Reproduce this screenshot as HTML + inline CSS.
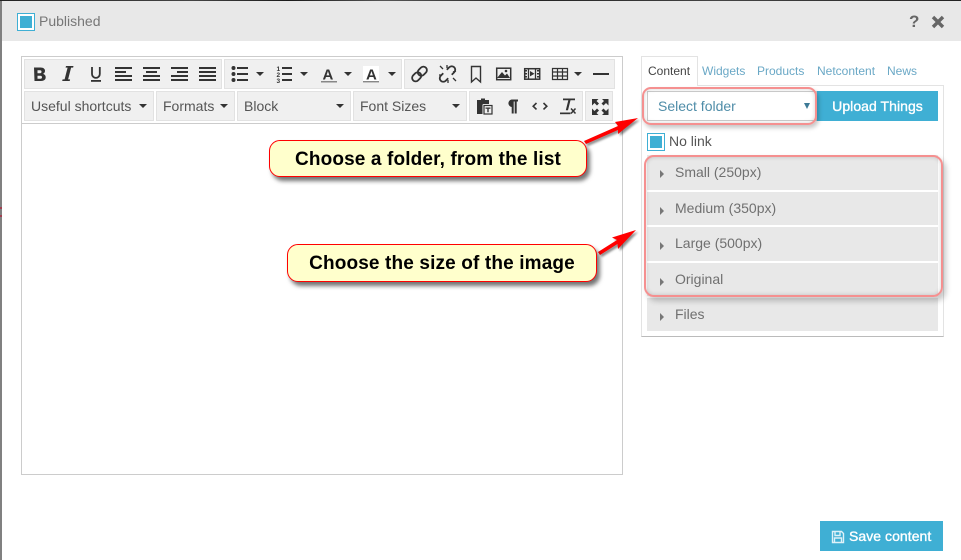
<!DOCTYPE html>
<html><head><meta charset="utf-8">
<style>
html,body{margin:0;padding:0}
body{width:961px;height:560px;overflow:hidden;position:relative;background:#fff;font-family:"Liberation Sans",sans-serif;font-size:14px;color:#555}
.a{position:absolute}
.t{position:absolute;white-space:nowrap}
.g{position:absolute;background:#f0f0f0;border:1px solid #e2e2e2;box-sizing:border-box}
.car{position:absolute;width:0;height:0;border-left:4px solid transparent;border-right:4px solid transparent;border-top:4px solid #333}
.i{position:absolute;left:0;top:0}
.row{position:absolute;left:647px;width:291px;background:#e8e8e8}
.row .tri{position:absolute;left:13px;top:15px;width:0;height:0;border-top:4px solid transparent;border-bottom:4px solid transparent;border-left:4px solid #777}
.row span{position:absolute;left:28px;top:9px;color:#707070;font-size:14px;white-space:nowrap}
.call{position:absolute;box-sizing:border-box;background:#ffffcc;border:1px solid #f00;border-radius:11px;box-shadow:3px 4px 4px rgba(0,0,0,.55);font-weight:bold;font-size:19px;letter-spacing:.14px;color:#000;text-align:center;white-space:nowrap}
.semi{color:#fff;font-weight:normal;font-size:14px;-webkit-text-stroke:.35px #fff;letter-spacing:.05px}
</style></head>
<body>
<div class="a" style="left:0;top:0;width:961px;height:2px;background:linear-gradient(90deg,#222,#444 20%,#1a1a1a 30%,#555 40%,#222 55%,#444 75%,#222)"></div>
<div class="a" style="left:0;top:1px;width:2px;height:559px;background:#808080"></div>
<div class="a" style="left:0;top:207px;width:2px;height:2px;background:#a04050"></div>
<div class="a" style="left:0;top:215px;width:2px;height:2px;background:#a04050"></div>
<div class="a" style="left:2px;top:1px;width:959px;height:40px;background:#e8e8e8"></div>

<div class="a" style="left:17px;top:13px;width:18px;height:18px;box-sizing:border-box;border:1px solid #3fafd4;background:#fff"><div class="a" style="left:2px;top:2px;width:12px;height:12px;background:#3fafd4"></div></div>
<div class="t" style="left:39px;top:13px;color:#777">Published</div>
<div class="t" style="left:909px;top:12px;font-weight:bold;font-size:17px;color:#666">?</div>
<svg class="a" style="left:931px;top:15px" width="14" height="14" viewBox="0 0 14 14"><path d="M2 2L12 12M12 2L2 12" stroke="#666" stroke-width="3.400"/></svg>

<!-- editor -->
<div class="a" style="left:21px;top:56px;width:602px;height:419px;box-sizing:border-box;border:1px solid #ccc"></div>
<div class="a" style="left:22px;top:123px;width:600px;height:1px;background:#ccc"></div>

<div class="g" style="left:24px;top:59px;width:198px;height:30px"></div>
<div class="g" style="left:224px;top:59px;width:178px;height:30px"></div>
<div class="g" style="left:404px;top:59px;width:211px;height:30px"></div>
<div class="g" style="left:24px;top:91px;width:130px;height:30px"></div>
<div class="g" style="left:156px;top:91px;width:79px;height:30px"></div>
<div class="g" style="left:237px;top:91px;width:114px;height:30px"></div>
<div class="g" style="left:353px;top:91px;width:114px;height:30px"></div>
<div class="g" style="left:469px;top:91px;width:114px;height:30px"></div>
<div class="g" style="left:585px;top:91px;width:28px;height:30px"></div>

<div class="t" style="left:31px;top:98px">Useful shortcuts</div><div class="car" style="left:139px;top:104px"></div>
<div class="t" style="left:163px;top:98px">Formats</div><div class="car" style="left:220px;top:104px"></div>
<div class="t" style="left:244px;top:98px">Block</div><div class="car" style="left:336px;top:104px"></div>
<div class="t" style="left:360px;top:98px">Font Sizes</div><div class="car" style="left:452px;top:104px"></div>

<svg class="i" width="961" height="560" viewBox="0 0 961 560">
<g fill="#333">
<!-- B -->
<path fill-rule="evenodd" d="M34 67.500h6.500c3 0 4.500 1.400 4.500 3.400 0 1.500-.8 2.600-2.200 3 1.800.4 2.900 1.600 2.900 3.400 0 2.400-1.800 3.700-4.700 3.700h-6.500zM37.500 70.200v3h2.500c1 0 1.500-.5 1.500-1.500s-.5-1.500-1.500-1.500zM37.500 75.700v3.100h2.800c1.100 0 1.700-.6 1.700-1.600s-.6-1.500-1.700-1.500z"/>
<!-- I -->
<path d="M66 66h7.500l-.4 1.600h-2l-3 11.800h2l-.4 1.600h-7.500l.4-1.600h2l3-11.800h-2z"/>
<!-- U -->
<path d="M92 67v7a3.800 3.800 0 0 0 7.800 0v-7" fill="none" stroke="#333" stroke-width="1.800"/>
<rect x="91" y="80" width="10" height="1.800"/>
<!-- align -->
<path d="M115 67h17v2h-17zM115 71h11v2h-11zM115 75h17v2h-17zM115 79h17v2h-17z"/>
<path d="M143 67h17v2h-17zM146 71h11v2h-11zM143 75h17v2h-17zM143 79h17v2h-17z"/>
<path d="M171 67h17v2h-17zM177 71h11v2h-11zM171 75h17v2h-17zM171 79h17v2h-17z"/>
<path d="M199 67h17v2h-17zM199 71h17v2h-17zM199 75h17v2h-17zM199 79h17v2h-17z"/>
<!-- bullets -->
<circle cx="233.500" cy="68" r="2"/><circle cx="233.500" cy="74" r="2"/><circle cx="233.500" cy="80" r="2"/>
<path d="M237 67h11v2h-11zM237 73h11v2h-11zM237 79h11v2h-11z"/>
<path d="M256 72h8l-4 4z"/>
<text x="276.500" y="71" font-size="6.500" font-family="Liberation Sans" font-weight="bold">1</text><text x="276.500" y="77" font-size="6.500" font-family="Liberation Sans" font-weight="bold">2</text><text x="276.500" y="83" font-size="6.500" font-family="Liberation Sans" font-weight="bold">3</text>
<path d="M282 67h10v2h-10zM282 73h10v2h-10zM282 79h10v2h-10z"/>
<path d="M300 72h8l-4 4z"/>
<!-- font colour -->
<text x="322.500" y="79.500" font-family="Liberation Sans" font-weight="bold" font-size="15">A</text>
<rect x="321" y="81" width="16" height="1.500" fill="#888"/>
<path d="M344 72h8l-4 4z"/>
<rect x="363" y="66" width="16" height="17" fill="#fff"/>
<text x="366" y="79.500" font-family="Liberation Sans" font-weight="bold" font-size="15">A</text>
<rect x="363" y="81" width="16" height="1.500" fill="#888"/>
<path d="M388 72h8l-4 4z"/>
</g>
<g fill="none" stroke="#333">
<!-- link -->
<g stroke-width="1.800" transform="rotate(-45 419.500 74)"><rect x="410.500" y="70.500" width="10" height="7" rx="3.500"/><rect x="418.500" y="70.500" width="10" height="7" rx="3.500"/></g>
<!-- unlink -->
<g stroke-width="1.800" transform="rotate(-45 447.500 74)"><path d="M445 70.500h-3.500a3.500 3.500 0 0 0 0 7h3.500M450 70.500h3.500a3.500 3.500 0 0 1 0 7h-3.500"/></g>
<path d="M440 66l3 3M447 65v3M456 81l-3-3M448 83v-3M439 75h3M456 71l-3 1" stroke-width="1.300"/>
<!-- bookmark -->
<path d="M471.500 66.500h9v15.500l-4.500-4-4.500 4z" stroke-width="1.400"/>
<!-- image -->
<rect x="496.700" y="68.200" width="14" height="11.500" stroke-width="1.500"/>
<!-- media -->
<rect x="524.700" y="68.700" width="15" height="10.500" stroke-width="1.500"/>
<path d="M528.500 68v11M535.500 68v11" stroke-width="1.300"/>
<!-- table -->
<path d="M552.500 68.500h15v11h-15zM552.500 72h15M552.500 76h15M557.500 68.500v11M562.500 68.500v11" stroke-width="1.200"/>
<!-- code -->
<path d="M536.500 103l-3.300 3.200 3.300 3.200M543.500 103l3.300 3.200-3.300 3.200" stroke-width="1.600"/>
</g>
<g fill="#333">
<path d="M497 78l5-6 3 3.500 2-2 3 4.500z"/><circle cx="506" cy="71" r="1.300"/>
<path d="M530 71l4.500 2.700-4.500 2.700z"/>
<path d="M525 70h2v1.500h-2zM525 73h2v1.500h-2zM525 76h2v1.500h-2zM537 70h2v1.500h-2zM537 73h2v1.500h-2zM537 76h2v1.500h-2z"/>
<path d="M574 72h8l-4 4z"/>
<rect x="593" y="73" width="16" height="2"/>
<!-- paste -->
<path d="M477 100h4v-1.500h4v1.500h4v4h-5.500a1 1 0 0 0-1 1v9h-5.500z"/>
<rect x="484" y="105.500" width="8" height="8.500" fill="#f0f0f0" stroke="#333" stroke-width="1.200"/>
<path d="M485.500 107.500h5v1.300h-1.800v3.500h-1.400v-3.500h-1.800z"/>
<!-- paragraph -->
<path d="M511.500 99.500h6.500v2h-1.300v12h-2v-12h-1v12h-2v-6.500a3.800 3.800 0 0 1-.2-7.500z"/>
<!-- Tx -->
<path d="M563 98.500h12v1.800h-4.500l-2.500 10h-2.200l2.500-10h-5.300z"/>
<rect x="560" y="112.500" width="10.500" height="1.700"/>
<path d="M571 108.500l4.500 5M575.500 108.500l-4.500 5" stroke="#333" stroke-width="1.500" fill="none"/>
<!-- fullscreen -->
<path d="M592 99h6.500l-2 2 2.500 2.500-2 2-2.500-2.500-2.500 2.500zM608.500 99h-6.500l2 2-2.500 2.500 2 2 2.500-2.500 2.500 2.500zM592 115h6.500l-2-2 2.500-2.500-2-2-2.500 2.500-2.500-2.500zM608.500 115h-6.500l2-2-2.500-2.500 2-2 2.500 2.500 2.500-2.500z"/>
</g>
</svg>

<!-- right panel -->
<div class="a" style="left:641px;top:85px;width:303px;height:252px;box-sizing:border-box;border:1px solid #e3e3e3;border-bottom:1px solid #bbb;background:#fff"></div>
<div class="a" style="left:641px;top:56px;width:57px;height:30px;box-sizing:border-box;border:1px solid #e3e3e3;border-bottom:0;background:#fff"></div>
<div class="t" style="left:648px;top:64px;font-size:12px;color:#444">Content</div>
<div class="t" style="left:702px;top:64px;font-size:12px;color:#6aa8c6">Widgets</div>
<div class="t" style="left:757px;top:64px;font-size:12px;color:#6aa8c6">Products</div>
<div class="t" style="left:817px;top:64px;font-size:12px;color:#6aa8c6">Netcontent</div>
<div class="t" style="left:887px;top:64px;font-size:12px;color:#6aa8c6">News</div>

<div class="a" style="left:647px;top:91px;width:170px;height:30px;box-sizing:border-box;background:#fff;border:1px solid #ccc"></div>
<div class="t" style="left:658px;top:98px;color:#4f8da8">Select folder</div>
<div class="a" style="left:804px;top:103px;width:0;height:0;border-left:3px solid transparent;border-right:3px solid transparent;border-top:6px solid #3d7a96"></div>
<div class="a semi" style="left:817px;top:91px;width:121px;height:30px;background:#3fafd4;text-align:center;line-height:30px">Upload Things</div>

<div class="a" style="left:647px;top:133px;width:18px;height:18px;box-sizing:border-box;border:1px solid #3fafd4;background:#fff"><div class="a" style="left:2px;top:2px;width:12px;height:12px;background:#3fafd4"></div></div>
<div class="t" style="left:669px;top:133px;color:#555">No link</div>

<div class="row" style="top:155px;height:35px"><div class="tri"></div><span>Small (250px)</span></div>
<div class="row" style="top:192px;height:33px"><div class="tri"></div><span style="top:8px">Medium (350px)</span></div>
<div class="row" style="top:227px;height:34px"><div class="tri"></div><span style="top:8px">Large (500px)</span></div>
<div class="row" style="top:263px;height:33px"><div class="tri"></div><span style="top:8px">Original</span></div>
<div class="row" style="top:298px;height:33px"><div class="tri"></div><span style="top:8px">Files</span></div>

<!-- highlights -->
<div class="a" style="left:642px;top:87px;width:175px;height:38px;box-sizing:border-box;border:2px solid #f59090;border-radius:9px;box-shadow:2px 3px 4px rgba(0,0,0,.22),inset 0 0 4px rgba(0,0,0,.18)"></div>
<div class="a" style="left:644px;top:155px;width:299px;height:142px;box-sizing:border-box;border:2px solid #f59090;border-radius:10px;box-shadow:3px 4px 6px rgba(0,0,0,.22),inset 0 0 4px rgba(0,0,0,.18)"></div>

<!-- arrows -->
<svg class="i" width="961" height="560" viewBox="0 0 961 560" style="filter:drop-shadow(2px 2px 1px rgba(0,0,0,.45))">
<path d="M584 141L618 126 615 122 638 118 618 134 618 130 586 144z" fill="#f00"/>
<path d="M598 252L617 240 612 237.500 636 230 618 249 617.500 244 600 255z" fill="#f00"/>
</svg>

<div class="call" style="left:269px;top:140px;width:318px;height:37px;line-height:37px">Choose a folder, from the list</div>
<div class="call" style="left:287px;top:244px;width:310px;height:38px;line-height:38px">Choose the size of the image</div>

<!-- save -->
<div class="a" style="left:820px;top:521px;width:123px;height:30px;background:#3fafd4"></div>
<svg class="a" style="left:831px;top:530px" width="14" height="14" viewBox="0 0 14 14"><path d="M1.500 1.500h9l2 2v9h-11zM4 1.500v4h5v-4M3.500 12.500v-4.500h7v4.500" fill="none" stroke="#dff1f8" stroke-width="1.400"/></svg>
<div class="t semi" style="left:849px;top:528px">Save content</div>
</body></html>
